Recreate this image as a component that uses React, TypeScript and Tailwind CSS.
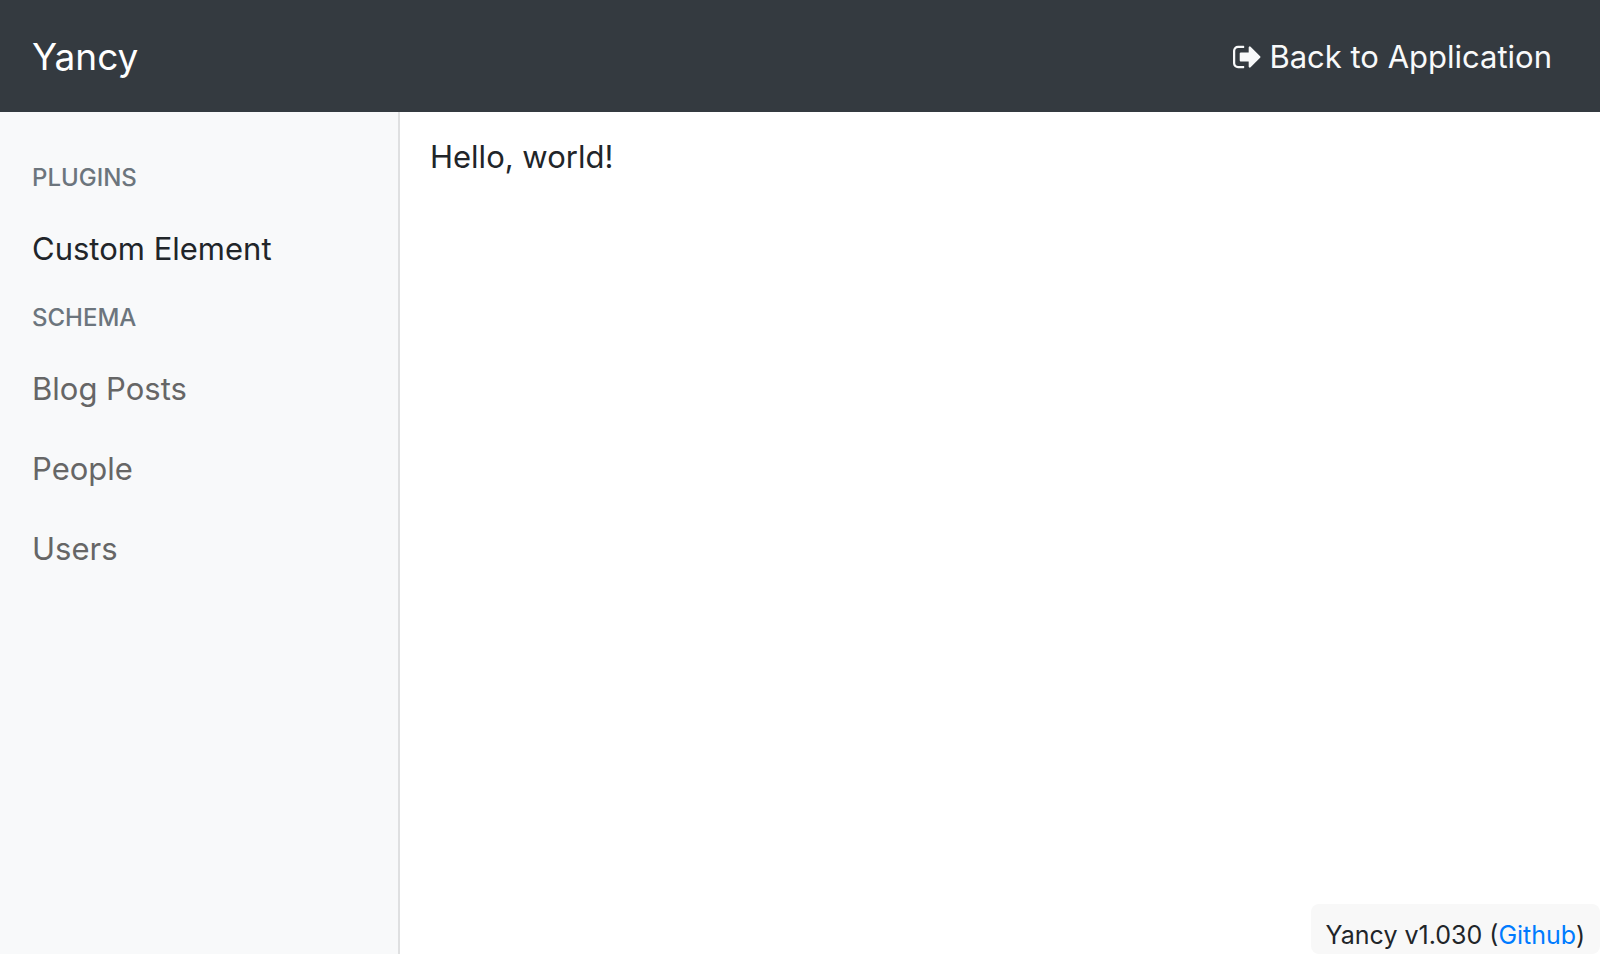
const plugins = ["Custom Element"];
const schema = ["Blog Posts", "People", "Users"];

function NavHeading({ children }: { children: string }) {
  return (
    <h6 className="mt-[13px] mb-[15px] text-2xl font-medium text-[#6c757d] uppercase">{children}</h6>
  );
}

export default function App() {
  return (
    <div className="flex min-h-screen flex-col bg-white font-['Inter',sans-serif] text-[31px] leading-[48px] text-[#212529]">
      <header className="flex h-28 items-center justify-between bg-[#343a40] pt-px pr-12 pl-8">
        <a href="#" className="text-[37px] leading-[60px] text-white">Yancy</a>
        <a href="#" className="flex items-center gap-2 text-[#f8f9fa]">
          <svg viewBox="0 128 1600 1280" className="h-6 w-7" fill="currentColor" aria-hidden="true">
            <path d="M640 1312q0 4 1 20t.5 26.500-3 23.500-10 19.500-20.500 6.500H288q-119 0-203.500-84.500T0 1120V416q0-119 84.500-203.500T288 128h320q13 0 22.500 9.500T640 160q0 4 1 20t.5 26.500-3 23.500-10 19.500T608 256H288q-66 0-113 47t-47 113v704q0 66 47 113t113 47h312l11.500 1 11.500 3 8 5.500 7 9z M1568 768q0 26-19 45l-544 544q-19 19-45 19t-45-19-19-45v-288H448q-26 0-45-19t-19-45V576q0-26 19-45t45-19h448V224q0-26 19-45t45-19 45 19l544 544q19 19 19 45z" />
          </svg>
          Back to Application
        </a>
      </header>
      <div className="flex flex-1">
        <nav className="flex w-1/4 shrink-0 flex-col border-r-2 border-[#dfe0e1] bg-[#f8f9fa] px-8 pt-[37px]">
          <NavHeading>Plugins</NavHeading>
          {plugins.map((name) => (
            <a key={name} href="#" className="py-4">{name}</a>
          ))}
          <NavHeading>Schema</NavHeading>
          {schema.map((name) => (
            <a key={name} href="#" className="py-4 text-[#666666]">{name}</a>
          ))}
        </nav>
        <main className="flex-1 px-[30px] pt-[21px]">Hello, world!</main>
      </div>
      <footer className="fixed right-0 bottom-0 rounded-lg bg-[#f8f8f8] px-[15px] pt-3 text-[25px] leading-[38px]">
        Yancy v1.030 (<a href="#" className="text-[#007bff]">Github</a>)
      </footer>
    </div>
  );
}
